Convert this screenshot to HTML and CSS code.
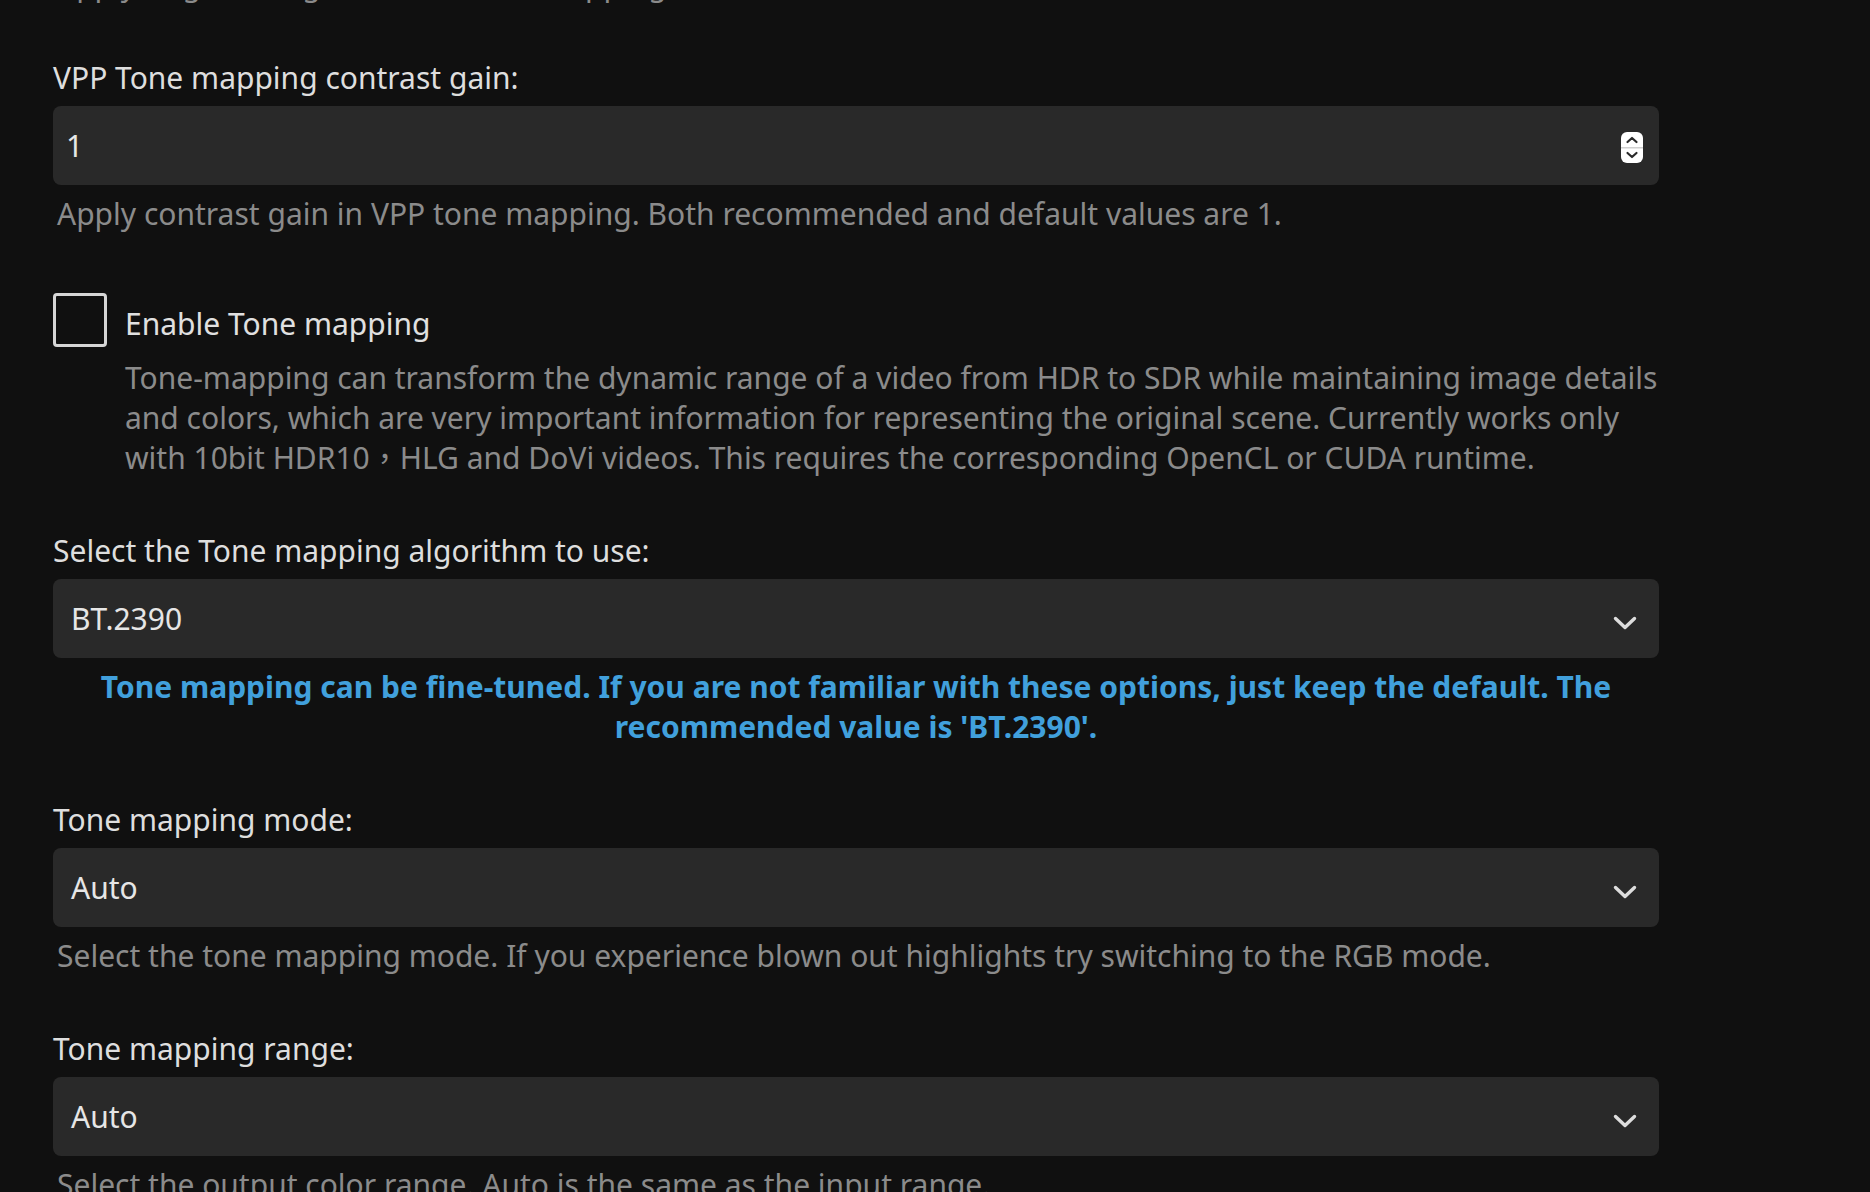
FILE: index.html
```html
<!DOCTYPE html>
<html lang="en">
<head>
<meta charset="utf-8">
<title>Tone mapping settings</title>
<link rel="stylesheet" href="styles.css">
</head>
<body>
<div class="page">
  <div class="field field-cut">
    <div class="desc">Apply brightness gain in VPP tone mapping. Both recommended and default values are 0.</div>
  </div>

  <div class="field">
    <label class="label">VPP Tone mapping contrast gain:</label>
    <div class="box box-number">
      <span class="value">1</span>
      <svg class="spinner" width="22" height="31" viewBox="0 0 22 31">
        <rect x="0" y="0" width="22" height="31" rx="6" fill="#ffffff"/>
        <rect x="0" y="15" width="22" height="1.5" fill="#d0d0d0"/>
        <path d="M6.5 10 L11 6 L15.5 10" fill="none" stroke="#2a2a2a" stroke-width="2.2" stroke-linecap="round" stroke-linejoin="round"/>
        <path d="M6.5 21 L11 25 L15.5 21" fill="none" stroke="#2a2a2a" stroke-width="2.2" stroke-linecap="round" stroke-linejoin="round"/>
      </svg>
    </div>
    <div class="desc">Apply contrast gain in VPP tone mapping. Both recommended and default values are 1.</div>
  </div>

  <div class="field check-field">
    <div class="check-row">
      <span class="checkbox"></span>
      <span class="check-label">Enable Tone mapping</span>
    </div>
    <div class="check-desc">Tone-mapping can transform the dynamic range of a video from HDR to SDR while maintaining image details and colors, which are very important information for representing the original scene. Currently works only with 10bit HDR10<span class="cjk">，</span>HLG and DoVi videos. This requires the corresponding OpenCL or CUDA runtime.</div>
  </div>

  <div class="field">
    <label class="label">Select the Tone mapping algorithm to use:</label>
    <div class="box">
      <span class="value">BT.2390</span>
      <svg class="chevron" width="24" height="16" viewBox="0 0 24 16">
        <path d="M2.5 3.5 L12 12.5 L21.5 3.5" fill="none" stroke="#dddddd" stroke-width="3.4" stroke-linecap="round" stroke-linejoin="round"/>
      </svg>
    </div>
    <div class="note">Tone mapping can be fine-tuned. If you are not familiar with these options, just keep the default. The recommended value is 'BT.2390'.</div>
  </div>

  <div class="field">
    <label class="label">Tone mapping mode:</label>
    <div class="box">
      <span class="value">Auto</span>
      <svg class="chevron" width="24" height="16" viewBox="0 0 24 16">
        <path d="M2.5 3.5 L12 12.5 L21.5 3.5" fill="none" stroke="#dddddd" stroke-width="3.4" stroke-linecap="round" stroke-linejoin="round"/>
      </svg>
    </div>
    <div class="desc">Select the tone mapping mode. If you experience blown out highlights try switching to the RGB mode.</div>
  </div>

  <div class="field">
    <label class="label">Tone mapping range:</label>
    <div class="box">
      <span class="value">Auto</span>
      <svg class="chevron" width="24" height="16" viewBox="0 0 24 16">
        <path d="M2.5 3.5 L12 12.5 L21.5 3.5" fill="none" stroke="#dddddd" stroke-width="3.4" stroke-linecap="round" stroke-linejoin="round"/>
      </svg>
    </div>
    <div class="desc">Select the output color range. Auto is the same as the input range.</div>
  </div>
</div>
</body>
</html>
```

FILE: styles.css
```css
html, body {
  margin: 0;
  padding: 0;
  background: #101010;
  overflow: hidden;
}

body {
  font-family: "Noto Sans", "Open Sans", sans-serif;
  font-size: 30px;
  line-height: 40px;
  color: #e0e0e0;
}

.page {
  width: 1606px;
  padding-left: 53px;
  margin-top: -35px;
  display: flex;
  flex-direction: column;
  gap: 53px;
}

.field {
  display: flex;
  flex-direction: column;
}

.label {
  display: block;
  color: #dedede;
  margin-bottom: 8px;
}

.box {
  height: 79px;
  background: #292929;
  border-radius: 8px;
  display: flex;
  align-items: center;
  justify-content: space-between;
  padding: 0 22px 0 18px;
  box-sizing: border-box;
}

.box-number {
  padding-left: 13px;
}

.value {
  color: #e6e6e6;
}

.spinner {
  margin-right: -6px;
  margin-top: 4px;
}

.chevron {
  margin-top: 8px;
}

.desc {
  color: #8b8b8b;
  padding-left: 4px;
  margin-top: 9px;
}

.field-cut .desc {
  margin-top: 0;
}

.check-field {
  padding-top: 6px;
}

.check-row {
  display: flex;
  align-items: center;
  gap: 18px;
}

.checkbox {
  width: 54px;
  height: 54px;
  box-sizing: border-box;
  border: 3px solid #d6d6d6;
  border-radius: 4px;
}

.check-label {
  color: #e0e0e0;
  padding-top: 7px;
}

.check-desc {
  color: #8b8b8b;
  padding-left: 72px;
  margin-top: 11px;
}

.cjk {
  font-family: "Noto Sans CJK TC", "Noto Sans", sans-serif;
  line-height: 10px;
}

.note {
  margin-top: 9px;
  color: #41a0dc;
  font-weight: bold;
  text-align: center;
  padding: 0 30px;
}
```
